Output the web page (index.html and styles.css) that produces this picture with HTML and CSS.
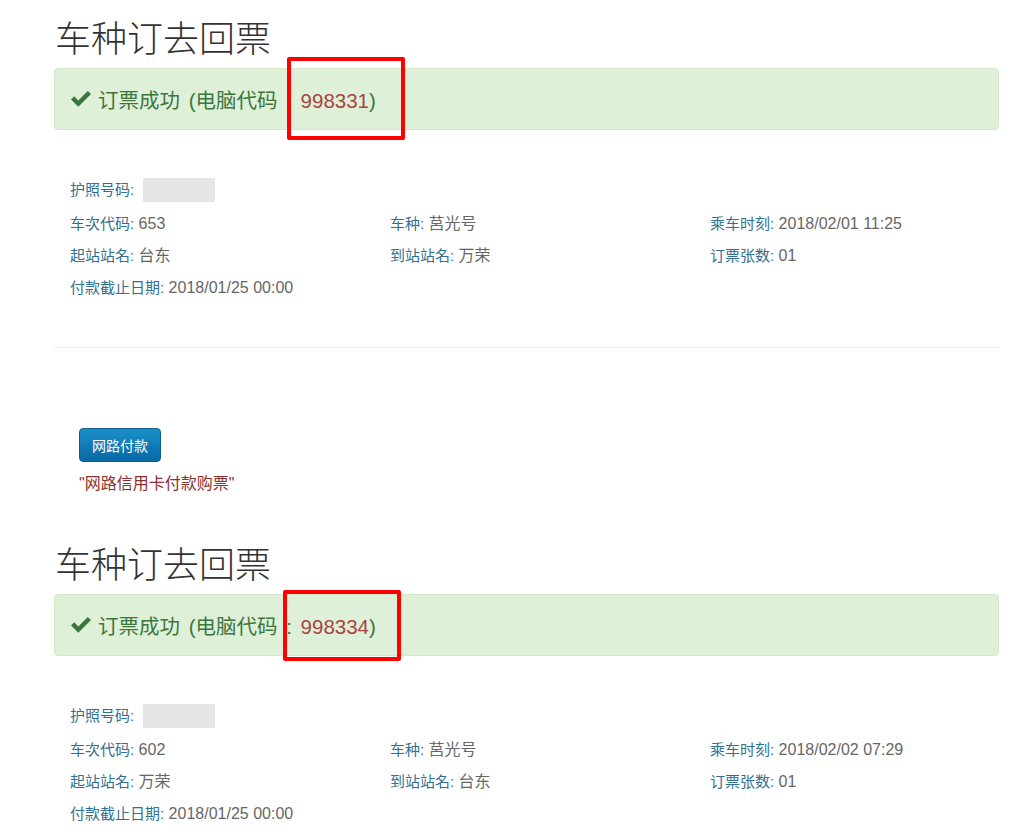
FILE: index.html
```html
<!DOCTYPE html>
<html lang="zh-TW">
<head>
    <meta charset="UTF-8">
    <title>车种订去回票</title>
    <link rel="stylesheet" href="styles.css">
</head>
<body>
    <div class="page">
        <div class="ticket">
            <h1 class="ticket-title">车种订去回票</h1>
            <div class="alert-success">
                <svg class="ok-icon" viewBox="0 0 20 17" width="20" height="17">
                    <path d="M0 9.5 L3.2 6.3 L7.3 10.4 L16.8 0.9 L20 4.1 L7.3 16.8 Z" fill="#3c763d"/>
                </svg>
                <span class="alert-text">订票成功 (电脑代码 : <span class="code">998331</span>)</span>
                <span class="mark mark-1"></span>
            </div>

            <div class="info">
                <div class="row">
                    <div class="cell"><span class="label">护照号码:</span><span class="masked"></span></div>
                </div>
                <div class="row">
                    <div class="cell"><span class="label">车次代码:</span> 653</div>
                    <div class="cell"><span class="label">车种:</span> 莒光号</div>
                    <div class="cell"><span class="label">乘车时刻:</span> 2018/02/01 11:25</div>
                </div>
                <div class="row">
                    <div class="cell"><span class="label">起站站名:</span> 台东</div>
                    <div class="cell"><span class="label">到站站名:</span> 万荣</div>
                    <div class="cell"><span class="label">订票张数:</span> 01</div>
                </div>
                <div class="row">
                    <div class="cell"><span class="label">付款截止日期:</span> 2018/01/25 00:00</div>
                </div>
            </div>

            <hr class="divider">

            <div class="pay">
                <button class="pay-button">网路付款</button>
                <div class="pay-note">"网路信用卡付款购票"</div>
            </div>
        </div>

        <div class="ticket">
            <h1 class="ticket-title">车种订去回票</h1>
            <div class="alert-success">
                <svg class="ok-icon" viewBox="0 0 20 17" width="20" height="17">
                    <path d="M0 9.5 L3.2 6.3 L7.3 10.4 L16.8 0.9 L20 4.1 L7.3 16.8 Z" fill="#3c763d"/>
                </svg>
                <span class="alert-text">订票成功 (电脑代码 : <span class="code">998334</span>)</span>
                <span class="mark mark-2"></span>
            </div>

            <div class="info">
                <div class="row">
                    <div class="cell"><span class="label">护照号码:</span><span class="masked"></span></div>
                </div>
                <div class="row">
                    <div class="cell"><span class="label">车次代码:</span> 602</div>
                    <div class="cell"><span class="label">车种:</span> 莒光号</div>
                    <div class="cell"><span class="label">乘车时刻:</span> 2018/02/02 07:29</div>
                </div>
                <div class="row">
                    <div class="cell"><span class="label">起站站名:</span> 万荣</div>
                    <div class="cell"><span class="label">到站站名:</span> 台东</div>
                    <div class="cell"><span class="label">订票张数:</span> 01</div>
                </div>
                <div class="row">
                    <div class="cell"><span class="label">付款截止日期:</span> 2018/01/25 00:00</div>
                </div>
            </div>
        </div>
    </div>
</body>
</html>
```

FILE: styles.css
```css
body {
    margin: 0;
    padding: 0;
    background: #fff;
    font-family: "Liberation Sans", Arial, "Noto Sans CJK SC", sans-serif;
    color: #333;
}
.page {
    width: 945px;
    margin-left: 54px;
}
.ticket {
    padding-bottom: 30px;
}
.ticket-title {
    margin: 20px 0 8px 1px;
    font-size: 36px;
    font-weight: 300;
    line-height: 40px;
    color: #333;
    font-family: "Liberation Serif", "Noto Sans CJK SC", serif;
}
.alert-success {
    position: relative;
    display: flex;
    align-items: center;
    height: 60px;
    padding: 0 16px;
    background-color: #dff0d8;
    border: 1px solid #d6e9c6;
    border-radius: 4px;
    color: #3c763d;
    font-size: 20.5px;
}
.ok-icon {
    margin-right: 7px;
    margin-top: -2px;
}
.alert-text {
    white-space: pre;
    word-spacing: 3px;
}
.alert-success .code {
    color: #a94442;
}
.mark {
    position: absolute;
    border: 4px solid #f00;
    border-radius: 2px;
}
.mark-1 {
    left: 232px;
    top: -12px;
    width: 110px;
    height: 75px;
}
.mark-2 {
    left: 228px;
    top: -5px;
    width: 110px;
    height: 63px;
}
.info {
    padding: 44px 0 0 16px;
    font-size: 16px;
}
.row {
    display: flex;
    height: 32px;
    align-items: center;
    color: #666;
}
.cell {
    flex: 0 0 320px;
    white-space: pre;
}
.label {
    color: #31708f;
    font-size: 15px;
}
.masked {
    display: inline-block;
    width: 72px;
    height: 24px;
    margin-left: 9px;
    background: #e6e6e6;
    vertical-align: middle;
}
.divider {
    margin: 45px 0 0;
    border: 0;
    border-top: 1px solid #eee;
}
.pay {
    padding: 80px 0 0 25px;
}
.pay-button {
    display: block;
    width: 82px;
    height: 34px;
    padding: 0;
    border: 1px solid #0a5f8e;
    border-radius: 4px;
    background: linear-gradient(to bottom, #1b8fc8 0%, #0769a5 100%);
    color: #fff;
    font-size: 14px;
    font-family: "Liberation Sans", Arial, "Noto Sans CJK SC", sans-serif;
    cursor: pointer;
}
.pay-note {
    margin-top: 10px;
    color: #8a2f2f;
    font-size: 16px;
    line-height: 24px;
}
```
